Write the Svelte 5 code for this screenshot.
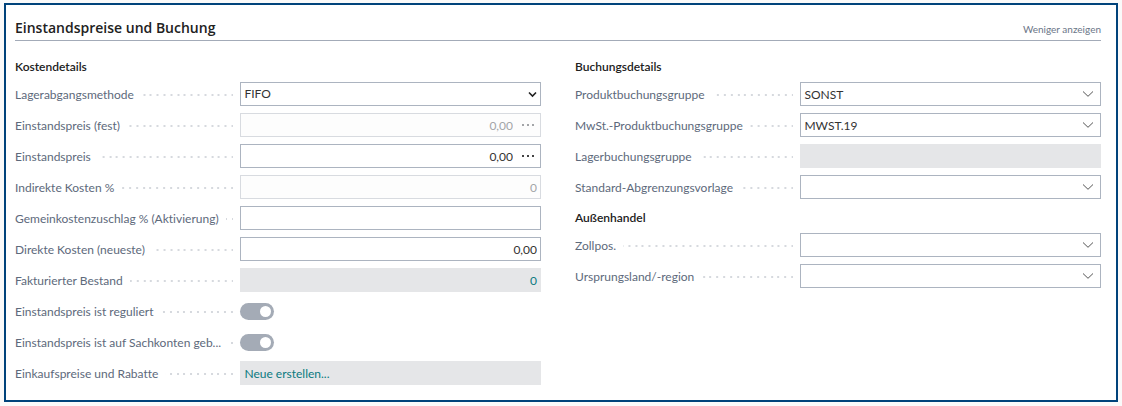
<script>
	let method = $state("FIFO");

	const costFields = [
		{ id: "cost-fixed", label: "Einstandspreis (fest)", type: "number", value: "0,00", more: true, disabled: true },
		{ id: "cost", label: "Einstandspreis", type: "number", value: "0,00", more: true },
		{ id: "indirect", label: "Indirekte Kosten %", type: "number", value: "0", disabled: true },
		{ id: "overhead", label: "Gemeinkostenzuschlag % (Aktivierung)", type: "number", value: "" },
		{ id: "direct", label: "Direkte Kosten (neueste)", type: "number", value: "0,00" },
		{ id: "invoiced", label: "Fakturierter Bestand", type: "link", value: "0", right: true },
		{ id: "adjusted", label: "Einstandspreis ist reguliert", type: "toggle" },
		{ id: "posted", label: "Einstandspreis ist auf Sachkonten geb...", type: "toggle" },
		{ id: "prices", label: "Einkaufspreise und Rabatte", type: "link", value: "Neue erstellen..." }
	];

	const postingFields = [
		{ id: "product-group", label: "Produktbuchungsgruppe", type: "lookup", value: "SONST" },
		{ id: "vat-group", label: "MwSt.-Produktbuchungsgruppe", type: "lookup", value: "MWST.19" },
		{ id: "stock-group", label: "Lagerbuchungsgruppe", type: "readonly", value: "" },
		{ id: "deferral", label: "Standard-Abgrenzungsvorlage", type: "lookup", value: "" }
	];

	const tradeFields = [
		{ id: "tariff", label: "Zollpos.", type: "lookup", value: "" },
		{ id: "origin", label: "Ursprungsland/-region", type: "lookup", value: "" }
	];
</script>

{#snippet caption(id, text)}
	<div class="caption">
		<label for={id}>{text}</label>
		<span class="dots"></span>
	</div>
{/snippet}

{#snippet field(f)}
	<div class="row">
		{@render caption(f.id, f.label)}

		{#if f.type === "number"}
			<div class="box" class:disabled={f.disabled}>
				<input id={f.id} class="right" type="text" value={f.value} disabled={f.disabled}>
				{#if f.more}
					<button class="more" aria-label="Mehr" disabled={f.disabled}>
						<svg width="14" height="4" viewBox="0 0 14 4">
							<rect x="1" y="1" width="2" height="2" />
							<rect x="6" y="1" width="2" height="2" />
							<rect x="11" y="1" width="2" height="2" />
						</svg>
					</button>
				{/if}
			</div>
		{:else if f.type === "lookup"}
			<div class="box">
				<input id={f.id} type="text" value={f.value}>
				<button class="open" aria-label="Auswählen">
					<svg width="12" height="8" viewBox="0 0 12 8">
						<path d="M1 1.5 L6 6.3 L11 1.5" />
					</svg>
				</button>
			</div>
		{:else if f.type === "readonly"}
			<div class="box filled">
				<input id={f.id} type="text" value={f.value} readonly>
			</div>
		{:else if f.type === "link"}
			<div class="box filled">
				<a id={f.id} class:right={f.right} href="#{f.id}">{f.value}</a>
			</div>
		{:else}
			<div class="switch">
				<input id={f.id} type="checkbox" role="switch" checked disabled>
			</div>
		{/if}
	</div>
{/snippet}

<main>
	<header>
		<h1>Einstandspreise und Buchung</h1>
		<button class="less">Weniger anzeigen</button>
	</header>

	<div class="columns">
		<section>
			<h2>Kostendetails</h2>
			<div class="row">
				{@render caption("method", "Lagerabgangsmethode")}
				<div class="box">
					<select id="method" bind:value={method}>
						<option>FIFO</option>
						<option>LIFO</option>
						<option>Ausgewählt</option>
						<option>Durchschnitt</option>
						<option>Standard</option>
					</select>
					<svg class="arrow" width="9" height="7" viewBox="0 0 9 7">
						<path d="M1 1.5 L4.5 5 L8 1.5" />
					</svg>
				</div>
			</div>
			{#each costFields as f}
				{@render field(f)}
			{/each}
		</section>

		<section>
			<h2>Buchungsdetails</h2>
			{#each postingFields as f}
				{@render field(f)}
			{/each}
			<h2>Außenhandel</h2>
			{#each tradeFields as f}
				{@render field(f)}
			{/each}
		</section>
	</div>
</main>

<style>
	:global(body) {
		margin: 0;
		background: #fafafa;
	}
	main {
		margin: 3px 4px;
		padding: 11px 15px 15px 9px;
		border: 2px solid #00437b;
		background: #fff;
		color: #212121;
		font-family: "Segoe UI", Lato, "Open Sans", sans-serif;
		font-size: 12px;
		font-variant-ligatures: none;
		line-height: 16px;
	}
	header {
		display: flex;
		justify-content: space-between;
		align-items: center;
		height: 24px;
		border-bottom: 1px solid #a3abb8;
	}
	h1 {
		margin: 0;
		font-family: "Segoe UI", "Open Sans", sans-serif;
		font-size: 14px;
		font-weight: 600;
		line-height: 20px;
	}
	h2 {
		box-sizing: border-box;
		height: 20px;
		margin: 0;
		padding-top: 4px;
		font-size: 12px;
		font-weight: 600;
		line-height: 16px;
	}
	button {
		padding: 0;
		border: 0;
		background: none;
		font: inherit;
		cursor: pointer;
	}
	.less {
		padding-top: 2px;
		color: #6b7687;
		font-size: 10px;
	}
	.columns {
		display: grid;
		grid-template-columns: 1fr 1fr;
		gap: 34px;
		padding-top: 14px;
	}
	section {
		display: flex;
		flex-direction: column;
		gap: 7px;
	}
	.row {
		display: grid;
		grid-template-columns: minmax(0, 3fr) minmax(0, 4fr);
		height: 24px;
	}
	.caption {
		display: flex;
		align-items: center;
		gap: 7px;
		padding: 2px 7px 0 0;
	}
	label {
		color: #5d697b;
		white-space: nowrap;
	}
	/* five dots spread over a 34px tile, counted from the right */
	.dots {
		flex: 1;
		height: 2px;
		background-image:
			linear-gradient(to left,
				#d6d9de 0 2px, transparent 2px 7px,
				#d6d9de 7px 9px, transparent 9px 14px,
				#d6d9de 14px 16px, transparent 16px 20px,
				#d6d9de 20px 22px, transparent 22px 27px,
				#d6d9de 27px 29px, transparent 29px);
		background-size: 34px 2px;
		background-position: right;
	}
	.box {
		box-sizing: border-box;
		display: flex;
		align-items: center;
		height: 24px;
		border: 1px solid #acb4c0;
		background: #fff;
	}
	.box.disabled {
		border-color: #d8dbe0;
		background: #fdfdfd;
	}
	.box.filled {
		border-color: #e5e6e8;
		background: #e5e6e8;
	}
	.box input,
	select {
		flex: 1;
		min-width: 0;
		height: 100%;
		box-sizing: border-box;
		border: 0;
		padding: 0 3px;
		background: none;
		color: #333;
		font: inherit;
		appearance: none;
		outline: none;
	}
	.box input:disabled {
		color: #a3a5a8;
	}
	.right {
		text-align: right;
	}
	.arrow {
		margin: 0 3px 0 -12px;
		fill: none;
		stroke: #212121;
		stroke-width: 1.6;
		pointer-events: none;
	}
	.more,
	.open {
		display: flex;
		align-items: center;
		justify-content: center;
		width: 24px;
		height: 100%;
	}
	.more svg {
		fill: #444;
	}
	.more:disabled svg {
		fill: #a3a5a8;
	}
	.open svg {
		fill: none;
		stroke: #555;
	}
	a {
		flex: 1;
		padding: 2px 3px 0;
		color: #0b7a80;
		text-decoration: none;
	}
	.switch {
		display: flex;
		align-items: center;
	}
	.switch input {
		display: flex;
		justify-content: flex-end;
		align-items: center;
		box-sizing: border-box;
		width: 34px;
		height: 17px;
		margin: 0;
		padding: 3px;
		border-radius: 9px;
		background: #a4abb6;
		appearance: none;
	}
	.switch input::before {
		content: "";
		width: 11px;
		height: 11px;
		border-radius: 50%;
		background: #fff;
	}
</style>
